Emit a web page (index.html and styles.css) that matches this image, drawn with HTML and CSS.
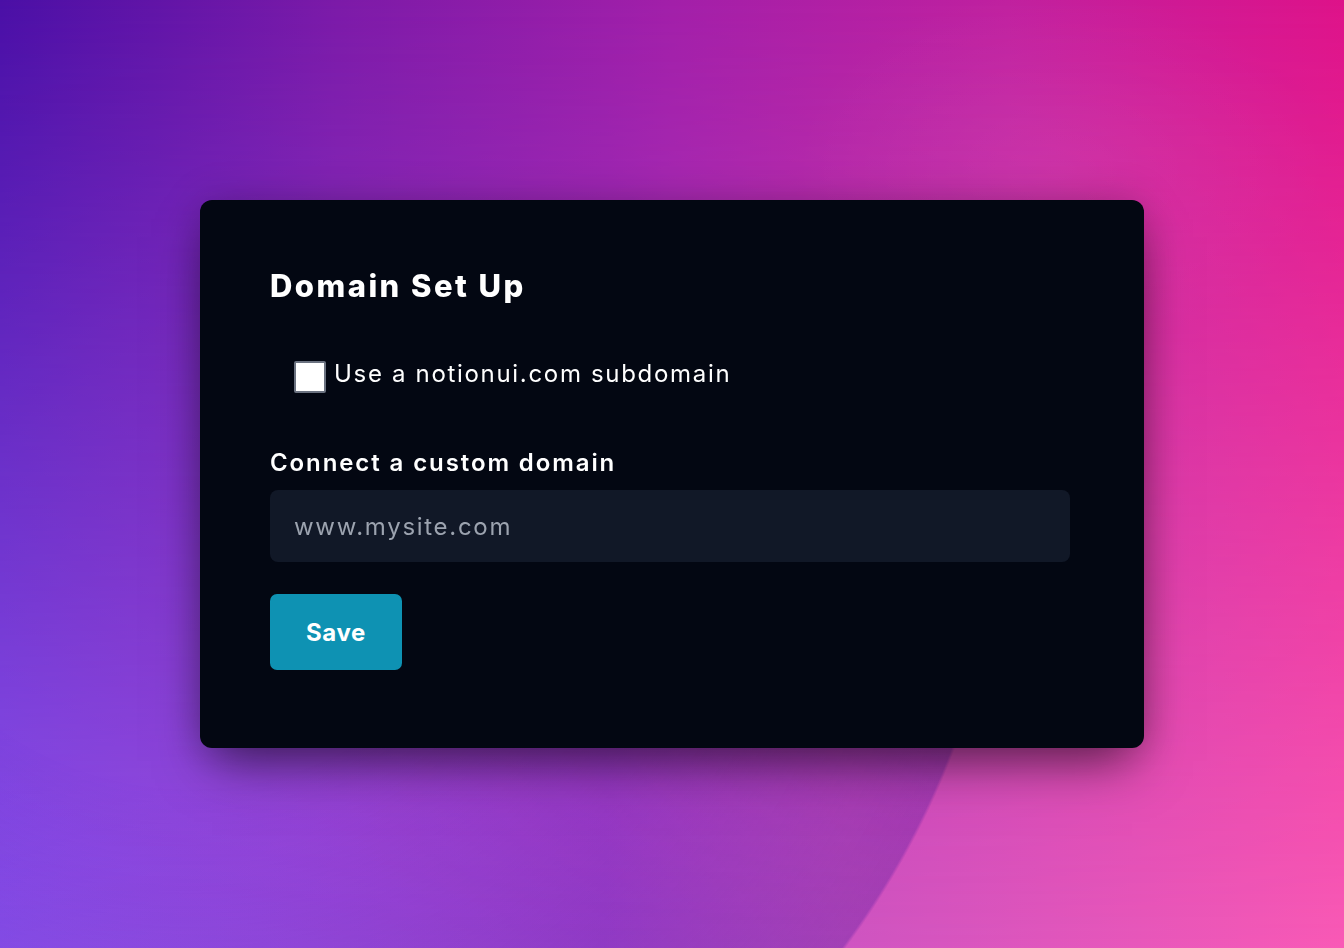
FILE: index.html
```html
<!DOCTYPE html>
<html lang="en">
<head>
<meta charset="utf-8">
<title>Domain Set Up</title>
<link rel="stylesheet" href="styles.css">
</head>
<body>
  <main class="card">
    <h1 class="title">Domain Set Up</h1>
    <label class="check-row">
      <input type="checkbox" class="check">
      <span class="check-text">Use a notionui.com subdomain</span>
    </label>
    <label class="field-label" for="domain">Connect a custom domain</label>
    <input id="domain" class="field" type="text" placeholder="www.mysite.com">
    <button class="save" type="button">Save</button>
  </main>
</body>
</html>
```

FILE: styles.css
```css
* { box-sizing: border-box; }

html {
  background: linear-gradient(to right, #8e53ee 0%, #a545cf 45%, #cf55c2 63%, #f95ab6 100%);
  min-height: 100%;
}

body {
  margin: 0;
  min-height: 100vh;
  display: flex;
  align-items: center;
  justify-content: center;
  font-family: Inter, "Noto Sans", sans-serif;
  color: #fff;
}

body::before {
  content: "";
  position: fixed;
  inset: 0;
  z-index: -2;
  background:
    radial-gradient(ellipse 380px 260px at 1060px 170px, rgba(255,255,255,0.06), transparent 70%),
    linear-gradient(to right, #4a0fa6 0%, #7b1aa8 25%, #a21fa9 50%, #c0209f 75%, #de1289 100%);
  -webkit-mask-image: linear-gradient(to bottom, #000 0%, rgba(0,0,0,0.5) 50%, transparent 100%);
  mask-image: linear-gradient(to bottom, #000 0%, rgba(0,0,0,0.5) 50%, transparent 100%);
}

body::after {
  content: "";
  position: fixed;
  inset: 0;
  z-index: -1;
  background: radial-gradient(circle 818px at 190px 459px, rgba(40,10,150,0) 40%, rgba(50,10,150,0.28) 99.6%, rgba(50,10,150,0) 100%);
  -webkit-mask-image: linear-gradient(to bottom, transparent 45%, #000 80%);
  mask-image: linear-gradient(to bottom, transparent 45%, #000 80%);
}

.card {
  width: 944px;
  background: #030712;
  border-radius: 12px;
  padding: 68px 74px 78px 70px;
  display: flex;
  flex-direction: column;
  align-items: flex-start;
  box-shadow: 0 25px 50px -12px rgba(0,0,0,0.55), 0 0 40px rgba(0,0,0,0.18);
}

.title {
  margin: 0;
  font-size: 31px;
  line-height: 36px;
  font-weight: 800;
  letter-spacing: 2.45px;
}

.check-row {
  margin-top: 54px;
  margin-left: 24px;
  display: flex;
  align-items: flex-start;
  gap: 8px;
  cursor: pointer;
}

.check {
  -webkit-appearance: none;
  appearance: none;
  margin: 3px 0 0;
  width: 32px;
  height: 32px;
  background: #fff;
  border: 2px solid #6b7280;
  border-radius: 2px;
}

.check-text {
  font-size: 24px;
  line-height: 32px;
  font-weight: 400;
  letter-spacing: 1.68px;
}

.field-label {
  margin-top: 54px;
  font-size: 24px;
  line-height: 32px;
  font-weight: 600;
  letter-spacing: 1.9px;
}

.field {
  margin-top: 11px;
  width: 800px;
  height: 72px;
  padding: 0 24px;
  border: none;
  outline: none;
  border-radius: 8px;
  background: #111827;
  color: #fff;
  font-family: inherit;
  font-size: 24px;
  letter-spacing: 1.7px;
}

.field::placeholder {
  color: #9ca3af;
}

.save {
  margin-top: 32px;
  width: 132px;
  height: 76px;
  padding: 0;
  border: none;
  border-radius: 7px;
  background: #0e92b3;
  color: #fff;
  font-family: inherit;
  font-size: 24px;
  font-weight: 700;
  letter-spacing: 0.6px;
  cursor: pointer;
}
```
